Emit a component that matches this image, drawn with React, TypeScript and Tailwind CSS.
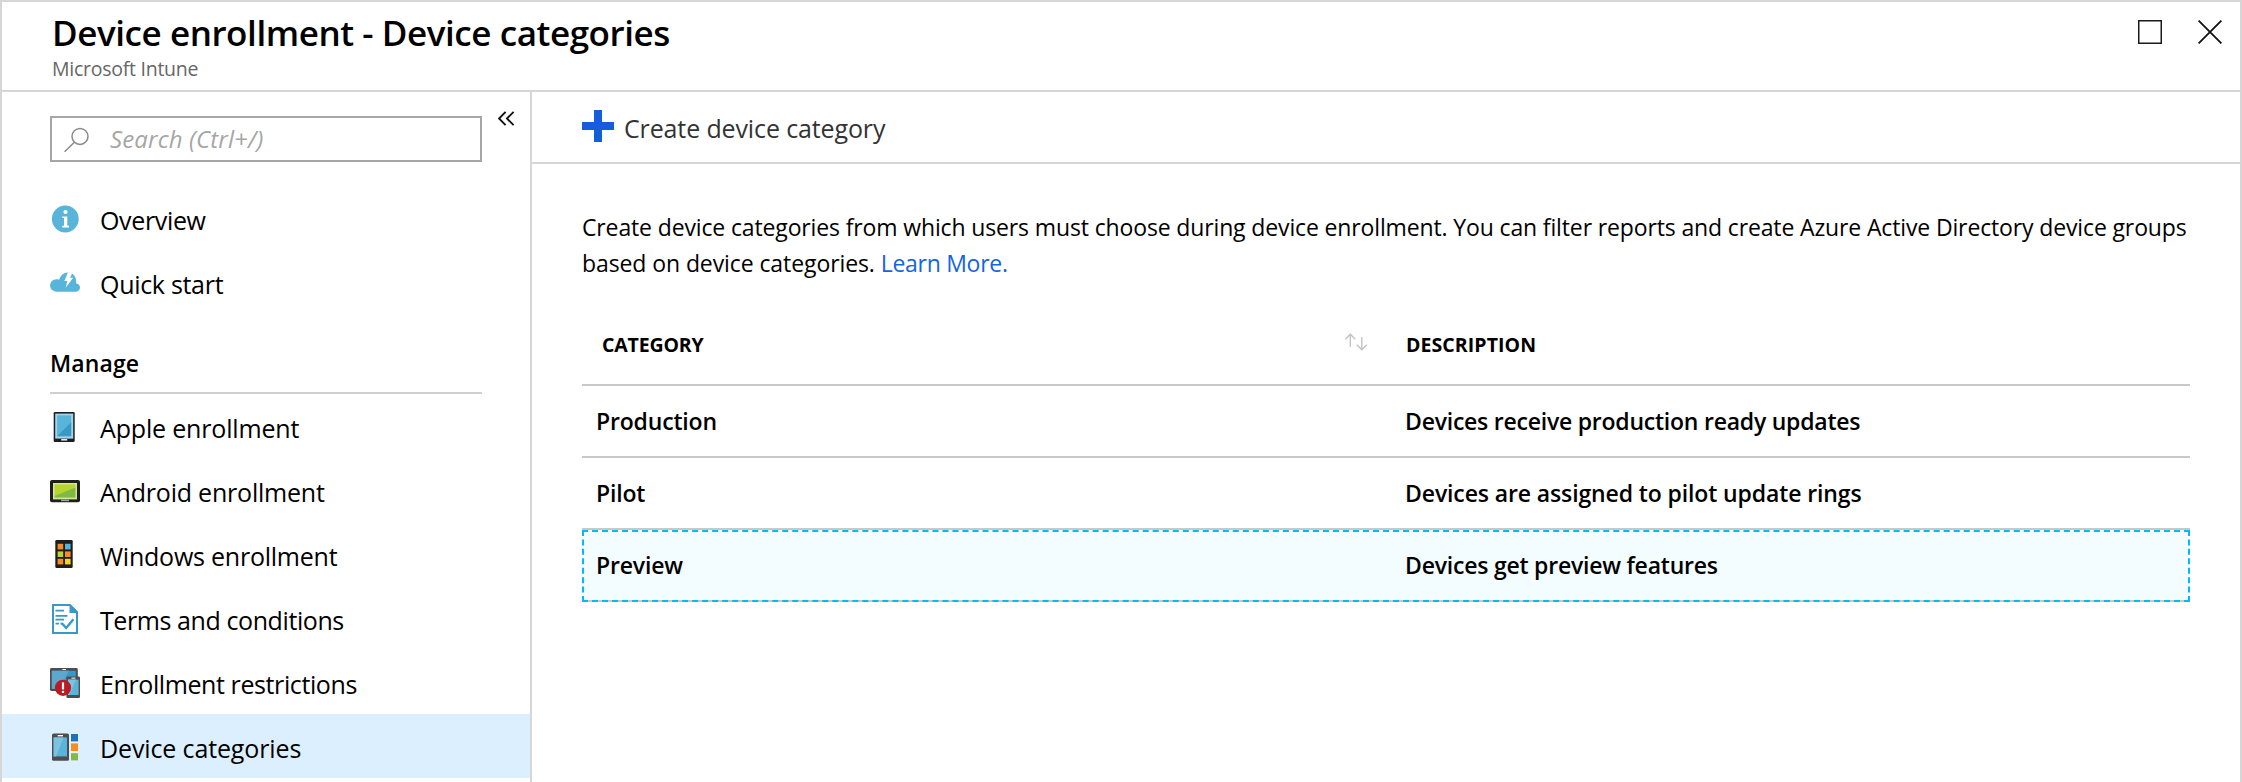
import type { ReactNode } from "react";

const InfoIcon = () => (
  <>
    <circle cx="15.3" cy="17" r="13.4" fill="#59b4d9" />
    <circle cx="15.5" cy="10" r="2.1" fill="#fff" />
    <path d="M12.2 14.4H17.3V23.8H19V25.4H12.2V23.8H14V16H12.2Z" fill="#fff" />
  </>
);

const CloudIcon = () => (
  <>
    <path
      d="M6.3 25.7A6.2 6.2 0 0 1 6.3 13.2C7.4 13.2 8.3 13.3 9.2 13.7C10.3 9.5 13.6 6.4 18 6.4C22.6 6.4 26.3 10.5 26.2 15.5C26.2 16.6 26 17.3 26.4 17.5C28.5 17.7 30 19.4 30 21.6C30 24 28.2 25.7 26 25.7Z"
      fill="#59b4d9"
    />
    <path d="M18 6.2H22.8L20 11.8H23.2L15.6 21.8L17.4 15H14.4Z" fill="#fff" />
  </>
);

const TabletIcon = () => (
  <>
    <rect x="3.7" y="2" width="21" height="30" rx="1.2" fill="#1e1e1e" />
    <rect x="5.2" y="3.6" width="18" height="25" fill="#a3d4e9" />
    <rect x="7.2" y="5.4" width="14" height="20.8" fill="#59b4d9" />
    <path d="M7.2 26.2L21.2 12.2V26.2Z" fill="#3999c6" />
    <rect x="11.2" y="29" width="6" height="1.6" fill="#e5e5e5" />
  </>
);

const AndroidIcon = () => (
  <>
    <rect x="0" y="6" width="30" height="22.2" rx="2" fill="#1e1e1e" />
    <rect x="3" y="9" width="24" height="16.4" fill="#d3e69a" />
    <rect x="4.6" y="10.4" width="20.8" height="13" fill="#b8d432" />
    <path d="M4.6 23.4V22L25.4 13.6V23.4Z" fill="#7fba42" />
    <rect x="11" y="25.6" width="8" height="1.6" fill="#a0a1a2" />
  </>
);

const WindowsPhoneIcon = () => (
  <>
    <rect x="5.3" y="2" width="17.4" height="28" rx="1.2" fill="#1e1e1e" />
    <rect x="7.6" y="5.8" width="5.6" height="5.6" fill="#f78d1e" />
    <rect x="15" y="5.8" width="5.6" height="5.6" fill="#59b4d9" />
    <rect x="7.6" y="13.4" width="5.6" height="5.6" fill="#b8d432" />
    <rect x="15" y="13.4" width="5.6" height="5.6" fill="#f78d1e" />
    <rect x="7.6" y="20.8" width="5.6" height="5.6" fill="#f78d1e" />
    <rect x="15" y="20.8" width="5.6" height="5.6" fill="#fcd116" />
  </>
);

const TermsIcon = () => (
  <>
    <path d="M3 3H20L27 10V31H3Z" fill="#fff" stroke="#3999c6" strokeWidth="2" />
    <path d="M19.5 2L28 10.5V11H19.5Z" fill="#3999c6" />
    <path
      d="M5.5 8.6H14M5.5 13.9H17.5M5.5 17.6H14M5.5 21.6H9M10.5 21.6H12"
      stroke="#3999c6"
      strokeWidth="1.6"
      fill="none"
    />
    <path d="M11.6 21L16.2 26L23.4 17.2" stroke="#3999c6" strokeWidth="2.4" fill="none" />
  </>
);

const RestrictionsIcon = () => (
  <>
    <rect x="0" y="2" width="27.8" height="23" rx="1.4" fill="#4d4d4f" />
    <rect x="1.8" y="4.8" width="24" height="18" fill="#3999c6" />
    <path d="M1.8 4.8H19L9 22.8H1.8Z" fill="#5ba8cf" />
    <rect x="12.4" y="3" width="3.6" height="1" fill="#fff" />
    <rect x="16.4" y="10.6" width="13.6" height="21.4" rx="1.2" fill="#4d4d4f" />
    <rect x="18" y="13.6" width="10.6" height="15.4" fill="#59b4d9" />
    <path d="M18 13.6H26L19.6 29H18Z" fill="#7cc3e1" />
    <rect x="21.4" y="11.6" width="4" height="1" fill="#fff" />
    <circle cx="13" cy="21.8" r="8.1" fill="#b81c22" />
    <rect x="11.9" y="16.4" width="2.2" height="7" fill="#fff" />
    <rect x="11.9" y="24.8" width="2.2" height="2.2" fill="#fff" />
  </>
);

const CategoriesIcon = () => (
  <>
    <rect x="2" y="3.6" width="17" height="27.2" rx="1.6" fill="#4d4d4f" />
    <rect x="3.6" y="7.4" width="13.4" height="19" fill="#59b4d9" />
    <path d="M3.6 7.4H13.6L6 26.4H3.6Z" fill="#7cc3e1" />
    <rect x="7.6" y="5" width="5.4" height="1.4" fill="#fff" />
    <rect x="20.2" y="3.4" width="8.4" height="27.8" fill="#e6f2fb" />
    <rect x="21" y="4" width="7" height="7.4" fill="#1e71b8" />
    <rect x="21" y="13.4" width="7" height="7.6" fill="#f78d1e" />
    <rect x="21" y="23.2" width="7" height="7.2" fill="#7fba42" />
  </>
);

type ItemProps = { icon: ReactNode; label: string; tracking: string; selected?: boolean };

const NavItem = ({ icon, label, tracking, selected }: ItemProps) => (
  <li className={`flex h-16 items-start pl-12 ${selected ? "bg-[#dcefff]" : ""}`}>
    <svg width="30" height="32" viewBox="0 0 30 32" className="mt-4 shrink-0 overflow-visible">
      {icon}
    </svg>
    <span className={`mt-[17px] ml-5 text-[25px] leading-[34px] whitespace-nowrap ${tracking}`}>{label}</span>
  </li>
);

const general: ItemProps[] = [
  { icon: <InfoIcon />, label: "Overview", tracking: "tracking-[-0.35px]" },
  { icon: <CloudIcon />, label: "Quick start", tracking: "tracking-[-0.3px]" },
];

const manage: ItemProps[] = [
  { icon: <TabletIcon />, label: "Apple enrollment", tracking: "tracking-[-0.17px]" },
  { icon: <AndroidIcon />, label: "Android enrollment", tracking: "tracking-[-0.21px]" },
  { icon: <WindowsPhoneIcon />, label: "Windows enrollment", tracking: "tracking-[-0.23px]" },
  { icon: <TermsIcon />, label: "Terms and conditions", tracking: "tracking-[-0.41px]" },
  { icon: <RestrictionsIcon />, label: "Enrollment restrictions", tracking: "tracking-[-0.4px]" },
  { icon: <CategoriesIcon />, label: "Device categories", tracking: "tracking-[-0.13px]", selected: true },
];

const rows = [
  { name: "Production", text: "Devices receive production ready updates", tracking: "tracking-[-0.23px]" },
  { name: "Pilot", text: "Devices are assigned to pilot update rings", tracking: "tracking-[-0.115px]" },
  { name: "Preview", text: "Devices get preview features", tracking: "tracking-[-0.22px]", focused: true },
];

export default function App() {
  return (
    <div className="flex h-[782px] w-[2242px] flex-col overflow-hidden border-x-2 border-t-2 border-[#d6d6d6] bg-white font-['Open_Sans','Noto_Sans',sans-serif] text-black">
      <header className="flex h-[90px] shrink-0 justify-between border-b-2 border-[#d6d6d6] pt-[7px] pr-[18px] pl-[50px]">
        <div>
          <h1 className="text-[35px] leading-[47px] font-[570] tracking-[-0.43px]">
            Device enrollment - Device categories
          </h1>
          <p className="-mt-px text-[19.5px] leading-[27px] tracking-[-0.26px] text-[#666]">Microsoft Intune</p>
        </div>
        <div className="mt-[11px] flex gap-9">
          <svg width="24" height="24" viewBox="0 0 24 24">
            <rect x="0.75" y="0.75" width="22.5" height="22.5" fill="none" stroke="#1a1a1a" strokeWidth="1.5" />
          </svg>
          <svg width="24" height="24" viewBox="0 0 24 24">
            <path d="M0.6 0.6L23.4 23.4M23.4 0.6L0.6 23.4" fill="none" stroke="#111" strokeWidth="1.8" />
          </svg>
        </div>
      </header>

      <div className="flex min-h-0 flex-1">
        <nav className="w-[530px] shrink-0 border-r-2 border-[#d6d6d6]">
          <div className="flex pt-[19px] pl-12">
            <div className="mt-[5px] flex h-[46px] w-[432px] border-2 border-[#a6a6a6] pl-3">
              <svg width="26" height="26" viewBox="0 0 26 26" className="mt-[9px]">
                <g fill="none" stroke="#8a8a8a" strokeWidth="1.5">
                  <circle cx="16" cy="9.4" r="8" />
                  <path d="M10.4 15.2L0.6 24.8" />
                </g>
              </svg>
              <span className="mt-1 ml-5 text-[24px] leading-[33px] tracking-[0.14px] text-[#a6a6a6] italic">
                Search (Ctrl+/)
              </span>
            </div>
            <svg width="18" height="16" viewBox="0 0 18 16" className="ml-4">
              <path
                d="M7.6 0.8L1 7.5L7.6 14.2M15.6 0.8L9 7.5L15.6 14.2"
                fill="none"
                stroke="#111"
                strokeWidth="1.9"
              />
            </svg>
          </div>
          <ul className="mt-6">
            {general.map((item) => (
              <NavItem key={item.label} {...item} />
            ))}
          </ul>
          <h2 className="mt-[33px] ml-12 text-[23px] leading-[32px] font-[570] tracking-[0.1px]">Manage</h2>
          <div className="mt-[13px] ml-12 h-0.5 w-[432px] bg-[#d0d0d0]" />
          <ul>
            {manage.map((item) => (
              <NavItem key={item.label} {...item} />
            ))}
          </ul>
        </nav>

        <main className="flex min-w-0 flex-1 flex-col">
          <div className="flex h-[72px] shrink-0 border-b-2 border-[#d6d6d6] pl-[50px]">
            <svg width="32" height="32" viewBox="0 0 32 32" className="mt-[18px]">
              <path d="M12 0H20V12H32V20H20V32H12V20H0V12H12Z" fill="#155ddb" />
            </svg>
            <span className="mt-[19px] ml-2.5 text-[25px] leading-[34px] tracking-[-0.13px] text-[#333]">
              Create device category
            </span>
          </div>

          <p className="mt-[45px] ml-[50px] text-[23px] leading-9 whitespace-nowrap">
            <span className="tracking-[-0.137px]">
              Create device categories from which users must choose during device enrollment. You can filter reports and
              create Azure Active Directory device groups
            </span>
            <br />
            <span className="tracking-[-0.09px]">based on device categories. </span>
            <a className="tracking-[-0.28px] text-[#1564e0]">Learn More.</a>
          </p>

          <div className="mt-[50px] ml-[50px] w-[1608px]">
            <div className="flex h-[55px] items-start border-b-2 border-[#c8c8c8] text-[19.5px] leading-[27px] font-bold">
              <div className="flex w-[822px] justify-between pr-9 pl-5">
                <span className="tracking-[-0.16px]">CATEGORY</span>
                <svg width="24" height="18" viewBox="0 0 24 18" className="mt-0.5">
                  <path
                    d="M6.3 14V1.4M1.4 6.2L6.3 1.2L11.2 6.2M17.8 4V16.6M12.9 11.8L17.8 16.8L22.7 11.8"
                    fill="none"
                    stroke="#c0c0c0"
                    strokeWidth="1.3"
                  />
                </svg>
              </div>
              <span className="ml-0.5 tracking-[0.08px]">DESCRIPTION</span>
            </div>
            {rows.map((row) => (
              <div
                key={row.name}
                className={`flex h-[72px] items-start border-b-2 border-[#c8c8c8] pt-[19px] text-[23px] leading-[32px] font-[570] ${
                  row.focused ? "bg-[#f3fcff] outline-2 -outline-offset-2 outline-[#00bcf2] outline-dashed" : ""
                }`}
              >
                <span className="w-[823px] pl-3.5 tracking-[-0.17px]">{row.name}</span>
                <span className={row.tracking}>{row.text}</span>
              </div>
            ))}
          </div>
        </main>
      </div>
    </div>
  );
}
